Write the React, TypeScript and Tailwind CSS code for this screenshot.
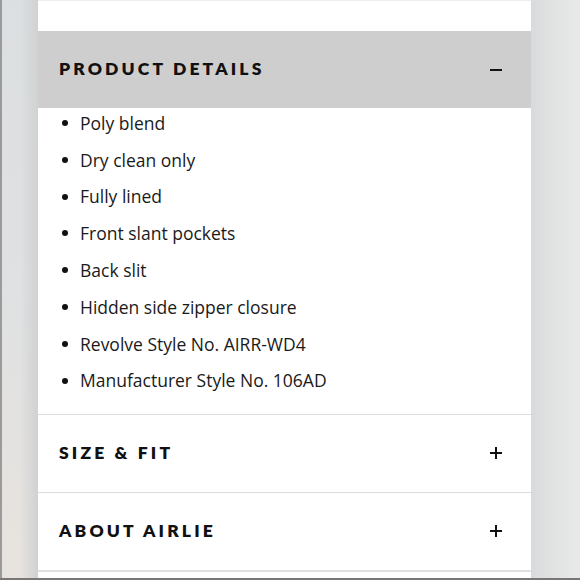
const details = [
  "Poly blend",
  "Dry clean only",
  "Fully lined",
  "Front slant pockets",
  "Back slit",
  "Hidden side zipper closure",
  "Revolve Style No. AIRR-WD4",
  "Manufacturer Style No. 106AD",
];

function Plus() {
  return (
    <svg width="14" height="14" viewBox="0 0 14 14" className="text-[#111]">
      <path d="M7 1v12M1 7h12" stroke="currentColor" strokeWidth="2" />
    </svg>
  );
}

function Minus() {
  return (
    <svg width="14" height="14" viewBox="0 0 14 14" className="text-[#111]">
      <path d="M1 7h12" stroke="currentColor" strokeWidth="2" />
    </svg>
  );
}

function SectionHeader({ title, open }: { title: string; open?: boolean }) {
  return (
    <div
      className={`flex h-[77px] items-center justify-between pl-[21px] pr-[28px] ${
        open ? "bg-[#cecece]" : "bg-white"
      }`}
    >
      <p className="font-['Lato',sans-serif] text-[17.5px] font-extrabold tracking-[0.18em] text-[#111]">
        {title}
      </p>
      {open ? <Minus /> : <Plus />}
    </div>
  );
}

export default function App() {
  return (
    <div className="flex h-[580px] w-[580px] border-b-2 border-[#777] bg-white font-['Open_Sans',sans-serif]">
      <div className="w-[38px] border-l-2 border-[#9a9a9a] bg-gradient-to-b from-[#dcdfe1] via-[#dfe1e2] to-[#e8e3de]">
        <div className="h-full w-full bg-gradient-to-r from-transparent via-transparent to-[#cfd1d2]" />
      </div>

      <div className="flex w-[493px] flex-col">
        <div className="h-[31px] border-t border-[#eeeeee] bg-white" />
        <SectionHeader title="PRODUCT DETAILS" open />
        <ul className="flex flex-col gap-[6.8px] border-b border-[#dcdcdc] pb-[18px] pl-[24px]">
          {details.map((item) => (
            <li key={item} className="flex h-[30px] items-center text-[17.5px] text-[#1a1a1a]">
              <span className="mr-[12px] inline-block h-[6px] w-[6px] rounded-full bg-[#111]" />
              {item}
            </li>
          ))}
        </ul>
        <div className="border-b border-[#dcdcdc]">
          <SectionHeader title="SIZE & FIT" />
        </div>
        <div className="border-b-2 border-[#e0e0e0]">
          <SectionHeader title="ABOUT AIRLIE" />
        </div>
        <div className="flex-1 bg-white" />
      </div>

      <div className="flex-1 bg-gradient-to-r from-[#d9dadb] via-[#e2e3e3] to-[#e8e9e9]" />
    </div>
  );
}
